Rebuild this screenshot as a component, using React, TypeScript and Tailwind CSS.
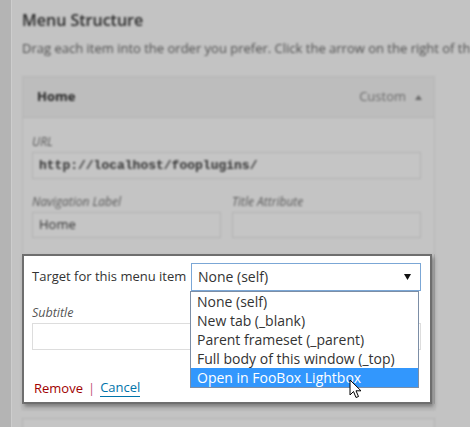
import React from 'react';

const options = [
  'None (self)',
  'New tab (_blank)',
  'Parent frameset (_parent)',
  'Full body of this window (_top)',
  'Open in FooBox Lightbox',
];

function Cursor() {
  return (
    <svg className="absolute left-[158px] top-[87px]" width="14" height="21" viewBox="0 0 14 21">
      <path d="M1 1 L1 16 L4.5 12.5 L7 18.5 L9.5 17.5 L7 11.8 L12 11.8 Z" fill="#fff" stroke="#000" strokeWidth="1" strokeLinejoin="round" />
    </svg>
  );
}

function TargetSelect() {
  return (
    <div className="relative ml-auto w-[230px] h-[28px] border border-[#7ba7d6] bg-white flex items-center pl-[6px] pr-[9px]">
      <span className="text-[14px] text-[#333] leading-none">None (self)</span>
      <svg className="ml-auto" width="7" height="6" viewBox="0 0 7 6">
        <polygon points="0,0 7,0 3.5,6" fill="#111" />
      </svg>
      <div className="absolute left-[-2px] top-[27px] w-[229px] border border-[#7c8ea6] bg-white z-10">
        {options.map((o, i) => (
          <div
            key={o}
            className={`h-[19px] pl-[6px] flex items-center text-[14px] leading-none ${
              i === options.length - 1 ? 'bg-[#3297fd] text-white' : 'text-[#333]'
            }`}
          >
            {o}
          </div>
        ))}
        <Cursor />
      </div>
    </div>
  );
}

export default function App() {
  return (
    <div className="w-[470px] h-[427px] overflow-hidden flex bg-[#c3c3c3] font-['Open_Sans',sans-serif]">
      <div className="w-[12px] shrink-0 bg-[#b4b4b4] border-r border-[#cdcdcd] blur-[0.5px]" />
      <div className="flex-1 min-w-0 pl-[10px] flex flex-col">
        <div className="blur-[0.8px]">
          <h2 className="pt-[9px] text-[16px] leading-[22px] font-semibold text-[#2a2a2a]">Menu Structure</h2>
          <p className="mt-[8px] text-[13px] leading-[18px] text-[#505050] whitespace-nowrap overflow-hidden">
            Drag each item into the order you prefer. Click the arrow on the right of the
          </p>
          <div className="mt-[19px] w-[413px] border-x border-t border-[#b6b6b6]">
            <div className="h-[41px] bg-[#bdbdbd] border-b border-[#b3b3b3] flex items-center pl-[14px] pr-[12px]">
              <span className="text-[13px] font-bold text-[#262626]">Home</span>
              <span className="ml-auto text-[13px] text-[#6a6a6a]">Custom</span>
              <svg className="ml-[9px]" width="7" height="5" viewBox="0 0 7 5">
                <polygon points="3.5,0 7,5 0,5" fill="#6a6a6a" />
              </svg>
            </div>
            <div className="pl-[9px] pt-[16px] pb-[16px] bg-[#c4c4c4]">
              <div className="text-[12px] leading-[16px] italic text-[#5a5a5a]">URL</div>
              <div className="mt-[2px] w-[389px] h-[27px] border border-[#b2b2b2] bg-[#c5c5c5] flex items-center pl-[6px] font-['Liberation_Mono',monospace] text-[13px] font-bold text-[#333]">
                http://localhost/fooplugins/
              </div>
              <div className="mt-[15px] flex gap-[11px]">
                <div>
                  <div className="text-[12px] leading-[16px] italic text-[#5a5a5a]">Navigation Label</div>
                  <div className="mt-[2px] w-[189px] h-[26px] border border-[#b2b2b2] bg-[#c5c5c5] flex items-center pl-[6px] text-[13px] text-[#333]">
                    Home
                  </div>
                </div>
                <div>
                  <div className="text-[12px] leading-[16px] italic text-[#5a5a5a]">Title Attribute</div>
                  <div className="mt-[2px] w-[189px] h-[26px] border border-[#b2b2b2] bg-[#c5c5c5]" />
                </div>
              </div>
            </div>
          </div>
        </div>

        <div className="w-[413px] border-r border-[#b0b0b0]">
          <div className="relative w-[410px] h-[150px] bg-white border-2 border-[#6e6e6e] shadow-[2px_3px_4px_rgba(0,0,0,0.35)] pl-[8px] pr-[9px] pt-[7px] flex flex-col">
            <div className="flex items-center">
              <span className="text-[13px] text-[#333]">Target for this menu item</span>
              <TargetSelect />
            </div>
            <div className="mt-[14px] text-[12.5px] leading-[16px] italic text-[#555]">Subtitle</div>
            <div className="mt-[2px] w-[389px] h-[27px] border border-[#dddddd]" />
            <div className="mt-[28px] flex items-center text-[13px] leading-[18px] pl-[2px]">
              <span className="text-[#a00000]">Remove</span>
              <span className="mx-[5px] text-[#c2557a]">|</span>
              <span className="text-[#0073aa] border-b border-[#0073aa]">Cancel</span>
            </div>
          </div>
        </div>

        <div className="blur-[0.8px]">
          <div className="w-[413px] h-[6px] border-x border-b border-[#b0b0b0]" />
          <div className="mt-[8px] w-[413px] h-[20px] border-x border-t border-[#b3b3b3] bg-[#c5c5c5]" />
        </div>
      </div>
    </div>
  );
}
